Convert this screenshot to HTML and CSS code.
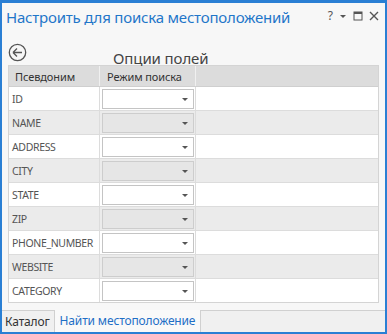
FILE: index.html
```html
<!DOCTYPE html>
<html>
<head>
<meta charset="utf-8">
<link rel="stylesheet" href="styles.css">
</head>
<body>
<div class="window">
  <div class="titlebar">
    <div class="title">Настроить для поиска местоположений</div>
    <div class="controls">
      <span class="ctl q">?</span>
      <svg class="ctl" width="8" height="8" viewBox="0 0 8 8"><path d="M1 3h6L4 6z" fill="#555"/></svg>
      <svg class="ctl" width="10" height="10" viewBox="0 0 10 10"><rect x="1" y="1" width="8" height="8" fill="none" stroke="#555" stroke-width="1"/><rect x="1" y="1" width="8" height="2" fill="#555"/></svg>
      <svg class="ctl" width="10" height="10" viewBox="0 0 10 10"><path d="M1 1L9 9M9 1L1 9" stroke="#555" stroke-width="1.4"/></svg>
    </div>
  </div>
  <div class="content">
    <div class="subhead">
      <svg class="back" width="19" height="19" viewBox="0 0 19 19"><circle cx="9.5" cy="9.5" r="8.2" fill="none" stroke="#555" stroke-width="1.3"/><path d="M5 9.5h9M5 9.5l4-4M5 9.5l4 4" fill="none" stroke="#555" stroke-width="1.3"/></svg>
      <div class="subtitle">Опции полей</div>
    </div>
    <div class="grid">
      <div class="row head">
        <div class="c1">Псевдоним</div>
        <div class="c2">Режим поиска</div>
        <div class="c3"></div>
      </div>
      <div class="row"><div class="c1">ID</div><div class="c2"><div class="dd"><span class="arr"></span></div></div><div class="c3"></div></div>
      <div class="row alt"><div class="c1">NAME</div><div class="c2"><div class="dd"><span class="arr"></span></div></div><div class="c3"></div></div>
      <div class="row"><div class="c1">ADDRESS</div><div class="c2"><div class="dd"><span class="arr"></span></div></div><div class="c3"></div></div>
      <div class="row alt"><div class="c1">CITY</div><div class="c2"><div class="dd"><span class="arr"></span></div></div><div class="c3"></div></div>
      <div class="row"><div class="c1">STATE</div><div class="c2"><div class="dd"><span class="arr"></span></div></div><div class="c3"></div></div>
      <div class="row alt"><div class="c1">ZIP</div><div class="c2"><div class="dd"><span class="arr"></span></div></div><div class="c3"></div></div>
      <div class="row"><div class="c1">PHONE_NUMBER</div><div class="c2"><div class="dd"><span class="arr"></span></div></div><div class="c3"></div></div>
      <div class="row alt"><div class="c1">WEBSITE</div><div class="c2"><div class="dd"><span class="arr"></span></div></div><div class="c3"></div></div>
      <div class="row last"><div class="c1">CATEGORY</div><div class="c2"><div class="dd"><span class="arr"></span></div></div><div class="c3"></div></div>
    </div>
  </div>
  <div class="tabs">
    <div class="tab">Каталог</div>
    <div class="tab active">Найти местоположение</div>
    <div class="tabfill"></div>
  </div>
</div>
</body>
</html>
```
FILE: styles.css
```css
* { box-sizing: border-box; }
html, body { margin: 0; padding: 0; }
body { font-family: "Noto Sans", "Open Sans", sans-serif; background: #fff; }
.window {
  width: 387px; height: 334px;
  border: 2px solid #2a7fd4; border-top-width: 3px;
  background: #f7f7f7;
  display: flex; flex-direction: column;
}
.titlebar {
  height: 35px; display: flex; align-items: flex-start;
  padding: 4px 0 0 4px;
}
.title {
  flex: 1; font-size: 15px; letter-spacing: -0.2px; color: #1f76c9; line-height: 20px; white-space: nowrap;
}
.controls { display: flex; align-items: center; gap: 6px; padding: 4px 6px 0 0; }
.ctl { display: block; }
.q { font-size: 12px; color: #555; line-height: 10px; }
.content { flex: 1; padding: 0 6px 0 6px; display: flex; flex-direction: column; }
.subhead { height: 27px; position: relative; display: flex; align-items: flex-start; }
.back { margin: 5px 0 0 0; display: block; }
.subtitle { font-size: 15px; letter-spacing: -0.1px; color: #444; line-height: 20px; margin: 10px 0 0 86px; }
.grid { width: 371px; border: 1px solid #d4d4d4; background: #fff; }
.row { display: flex; height: 24px; border-bottom: 1px solid #dcdcdc; }
.row.last { border-bottom: none; height: 23px; }
.row.head { height: 21px; background: #dcdcdc; border-bottom: 1px solid #cfcfcf; }
.row.alt { background: #ebebeb; }
.c1 { width: 91px; border-right: 1px solid #dcdcdc; font-size: 10.5px; letter-spacing: -0.35px; color: #555; padding-left: 3px; display: flex; align-items: center; white-space: nowrap; overflow: hidden; }
.c2 { width: 96px; border-right: 1px solid #dcdcdc; padding: 2px 1px 1px 2px; }
.c3 { flex: 1; }
.head .c1 { color: #333; padding-left: 6px; font-size: 11px; letter-spacing: -0.1px; border-right-color: #f0f0f0; }
.head .c2 { color: #333; font-size: 11px; letter-spacing: -0.1px; padding: 0 0 0 7px; display: flex; align-items: center; border-right-color: #f0f0f0; }
.dd { height: 20px; border: 1px solid #c4c4c4; background: #fff; position: relative; }
.alt .dd { background: #e6e6e6; border-color: #cdcdcd; }
.arr { position: absolute; right: 5px; top: 8px; width: 0; height: 0; border-left: 3px solid transparent; border-right: 3px solid transparent; border-top: 3px solid #555; }
.tabs { height: 22px; display: flex; margin-top: 7px; }
.tab { font-size: 12px; letter-spacing: -0.15px; color: #333; padding: 1px 4px 0 3px; border-top: 1px solid #d0d0d0; background: #f0f0f0; line-height: 19px; white-space: nowrap; }
.tab.active { color: #1f6fc6; background: #f9f9f9; border-top: none; border-left: 1px solid #d0d0d0; border-right: 1px solid #d0d0d0; padding-left: 5px; padding-right: 5px; }
.tabfill { flex: 1; border-top: 1px solid #d0d0d0; background: #f0f0f0; }
```
